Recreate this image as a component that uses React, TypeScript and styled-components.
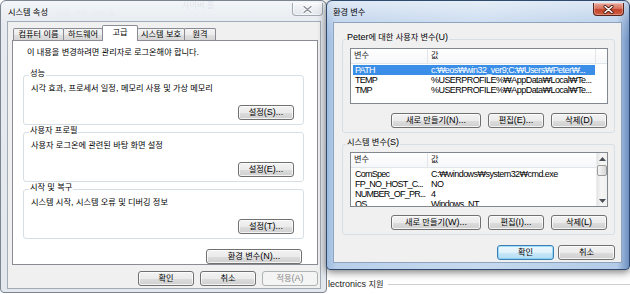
import React from "react";
import styled, { createGlobalStyle, css } from "styled-components";

const FONT = `"Liberation Sans", "Noto Sans CJK KR", sans-serif`;

const GlobalStyle = createGlobalStyle`
  * { box-sizing: border-box; }
  html, body { margin: 0; padding: 0; background: #ffffff; }
  body { overflow: hidden; }
`;

const HANGUL_RUN =
  /([\u1100-\u11ff\u3130-\u318f\uac00-\ud7a3]+(?: +[\u1100-\u11ff\u3130-\u318f\uac00-\ud7a3]+)*)/;

const Hangul = styled.span`
  font-size: 8.2px;
`;

const Tx: React.FC<{ children: string }> = ({ children }) => {
  const parts = children.split(HANGUL_RUN);
  return (
    <>
      {parts.map((p, i) =>
        i % 2 === 1 ? <Hangul key={i}>{p}</Hangul> : <React.Fragment key={i}>{p}</React.Fragment>
      )}
    </>
  );
};

const Desktop = styled.div`
  position: relative;
  width: 630px;
  height: 294px;
  overflow: hidden;
  background: #ffffff;
  font-family: ${FONT};
  font-size: 9px;
  line-height: 10px;
  color: #000;
`;

const BackdropText = styled.div<{ $x: number; $y: number; $c: string; $blur: number; $o: number }>`
  position: absolute;
  left: ${(p) => p.$x}px;
  top: ${(p) => p.$y}px;
  color: ${(p) => p.$c};
  filter: blur(${(p) => p.$blur}px);
  opacity: ${(p) => p.$o};
  font-size: 10px;
  line-height: 10px;
  white-space: nowrap;
`;

const FooterLegend = styled.div`
  position: absolute;
  left: 328px;
  top: 279px;
  width: 302px;
  display: flex;
  align-items: center;
  gap: 4px;
  color: #222;
  white-space: nowrap;
  &::after {
    content: "";
    flex: 1;
    height: 1px;
    background: #cfcfcf;
  }
`;

const WindowFrame = styled.div<{ $active?: boolean }>`
  position: absolute;
  top: 0;
  display: flex;
  flex-direction: column;
  border-radius: 6px 6px 4px 4px;
  ${(p) =>
    p.$active
      ? css`
          border: 1px solid #2f4a6e;
          background: linear-gradient(
              180deg,
              rgba(255, 255, 255, 0.55) 0px,
              rgba(255, 255, 255, 0.15) 22px,
              rgba(255, 255, 255, 0) 40px
            ),
            linear-gradient(90deg, #9dbbe0 0%, #b9cfea 3%, #c6d9ee 50%, #b3cbe8 96%, #6d8fc0 100%);
          box-shadow: 0 2px 8px rgba(0, 0, 0, 0.55);
        `
      : css`
          border: 1px solid #7b848f;
          background: linear-gradient(
            180deg,
            rgba(240, 243, 246, 0.8) 0px,
            rgba(228, 233, 239, 0.92) 24px,
            #e3e8ee 100%
          );
        `}
`;

const LeftWindow = styled(WindowFrame)`
  left: 0;
  width: 327px;
  height: 293px;
  padding: 0 5px 3px 6px;
`;

const RightWindow = styled(WindowFrame)`
  left: 326px;
  width: 304px;
  height: 270px;
  padding: 0 7px 6px 6px;
`;

const TitleBar = styled.div<{ $h: number }>`
  height: ${(p) => p.$h}px;
  display: flex;
  align-items: flex-start;
  flex-shrink: 0;
`;

const TitleText = styled.div<{ $ml: number }>`
  margin: 6px 0 0 ${(p) => p.$ml}px;
  white-space: nowrap;
  color: #000;
`;

const CloseButton = styled.div<{ $active?: boolean }>`
  margin: 2px -2px 0 auto;
  width: 31px;
  height: 13px;
  border-radius: 0 0 4px 4px;
  display: flex;
  align-items: center;
  justify-content: center;
  ${(p) =>
    p.$active
      ? css`
          border: 1px solid #5a241a;
          border-top: none;
          background: linear-gradient(180deg, #e9a99b 0%, #d8735f 45%, #c4452b 55%, #cf5e42 100%);
          box-shadow: inset 0 0 0 1px rgba(255, 255, 255, 0.3);
        `
      : css`
          border: 1px solid #a1a9b3;
          border-top: none;
          background: linear-gradient(180deg, #f6f8fa, #e2e7ed);
          box-shadow: inset 0 0 0 1px rgba(255, 255, 255, 0.6);
        `}
`;

const Client = styled.div<{ $edge: string }>`
  flex: 1;
  min-height: 0;
  display: flex;
  flex-direction: column;
  background: #f0f0f0;
  border: 1px solid ${(p) => p.$edge};
`;

const RightClient = styled(Client)`
  padding: 9px 6px 0 8px;
`;

const TabStrip = styled.div`
  position: relative;
  z-index: 1;
  display: flex;
  align-items: flex-end;
  height: 15px;
  margin-top: 3px;
  padding-left: 5px;
`;

const Tab = styled.div<{ $w: number; $active?: boolean }>`
  width: ${(p) => p.$w}px;
  height: 12px;
  margin-left: -1px;
  border: 1px solid #898c95;
  border-bottom: none;
  border-radius: 2px 2px 0 0;
  background: linear-gradient(180deg, #f4f4f4 0%, #ececec 50%, #e0e0e0 51%, #d6d6d6 100%);
  display: flex;
  align-items: center;
  justify-content: center;
  white-space: nowrap;
  &:first-child {
    margin-left: 0;
  }
  ${(p) =>
    p.$active &&
    css`
      height: 16px;
      margin-bottom: -1px;
      background: #ffffff;
      padding-bottom: 2px;
    `}
`;

const TabPanel = styled.div`
  margin-left: 4px;
  width: 306px;
  height: 225px;
  flex-shrink: 0;
  background: #ffffff;
  border: 1px solid #898c95;
  padding: 6px 13px 0 10px;
  display: flex;
  flex-direction: column;
`;

const Notice = styled.div`
  margin: 0 0 10px 4px;
  white-space: nowrap;
`;

const Group = styled.fieldset<{ $pl: number; $pr: number; $mt?: number }>`
  margin: ${(p) => p.$mt ?? 0}px 0 0;
  min-width: 0;
  border: 1px solid #d5dfe5;
  border-radius: 3px;
  padding: 0 ${(p) => p.$pr}px 4px ${(p) => p.$pl}px;
`;

const GroupLegend = styled.legend<{ $ml: number }>`
  padding: 0 1px 4px;
  margin-left: ${(p) => p.$ml}px;
  line-height: 10px;
  white-space: nowrap;
`;

const GroupText = styled.div`
  line-height: 10px;
  white-space: nowrap;
`;

const ButtonRow = styled.div<{ $mt: number; $gap: number; $pr?: number }>`
  display: flex;
  justify-content: flex-end;
  gap: ${(p) => p.$gap}px;
  margin-top: ${(p) => p.$mt}px;
  padding-right: ${(p) => p.$pr ?? 0}px;
  flex-shrink: 0;
`;

const Button = styled.button<{ $w: number; $default?: boolean }>`
  appearance: none;
  width: ${(p) => p.$w}px;
  height: 15px;
  margin: 0;
  padding: 0;
  font-family: inherit;
  font-size: 9px;
  line-height: 13px;
  color: #000;
  white-space: nowrap;
  border: 1px solid #707070;
  border-radius: 3px;
  background: linear-gradient(180deg, #f2f2f2 0%, #ebebeb 50%, #dddddd 51%, #cfcfcf 100%);
  box-shadow: inset 0 0 0 1px rgba(255, 255, 255, 0.75);
  ${(p) =>
    p.$default &&
    css`
      border-color: #3c7fb1;
      background: linear-gradient(180deg, #eef8fd 0%, #dff1fb 50%, #c9e8f8 51%, #b4dcf3 100%);
      box-shadow: inset 0 0 0 1px rgba(96, 200, 248, 0.55);
    `}
  &:disabled {
    color: #8a8a8a;
    border-color: #adb2b5;
    background: #f4f4f4;
    box-shadow: none;
  }
`;

const ListView = styled.div<{ $h: number; $mt: number }>`
  height: ${(p) => p.$h}px;
  margin-top: ${(p) => p.$mt}px;
  border: 1px solid #828790;
  background: #ffffff;
  display: flex;
  overflow: hidden;
  flex-shrink: 0;
`;

const ListBody = styled.div`
  flex: 1;
  min-width: 0;
  display: flex;
  flex-direction: column;
  overflow: hidden;
`;

const ListHeader = styled.div`
  display: flex;
  height: 15px;
  flex-shrink: 0;
  border-bottom: 1px solid #e2e5ea;
  background: linear-gradient(180deg, #ffffff, #f6f7f9);
`;

const HeaderCell = styled.div<{ $w?: number; $last?: boolean }>`
  ${(p) => (p.$w ? `width: ${p.$w}px; flex-shrink: 0;` : "flex: 1;")}
  border-right: ${(p) => (p.$last ? "none" : "1px solid #e3e5e9")};
  padding-left: 3px;
  display: flex;
  align-items: center;
  color: #1a1a1a;
  white-space: nowrap;
`;

const Rows = styled.div`
  padding-top: 1px;
`;

const Row = styled.div<{ $sel?: boolean }>`
  display: flex;
  height: 10px;
  width: 242px;
  margin-left: 2px;
  line-height: 10px;
  white-space: nowrap;
  ${(p) =>
    p.$sel &&
    css`
      background: #3a8ee8;
      color: #ffffff;
    `}
`;

const NameCell = styled.div`
  width: 74px;
  flex-shrink: 0;
  padding-left: 2px;
  overflow: hidden;
  letter-spacing: -0.75px;
`;

const ValueCell = styled.div`
  flex: 1;
  min-width: 0;
  padding-left: 4px;
  overflow: hidden;
  letter-spacing: -0.55px;
`;

const ScrollBar = styled.div`
  width: 11px;
  flex-shrink: 0;
  display: flex;
  flex-direction: column;
  background: linear-gradient(90deg, #e4e4e4, #f6f6f6 40%, #f0f0f0);
  border-left: 1px solid #ececec;
`;

const ScrollArrow = styled.div`
  height: 11px;
  flex-shrink: 0;
  display: flex;
  align-items: center;
  justify-content: center;
`;

const ScrollThumb = styled.div`
  height: 11px;
  margin: 1px 0 0 0;
  border: 1px solid #9b9b9b;
  border-radius: 2px;
  background: linear-gradient(90deg, #f6f6f6, #e6e6e6 50%, #d6d6d6);
`;

const ScrollTrack = styled.div`
  flex: 1;
`;

const CloseGlyph: React.FC<{ active?: boolean }> = ({ active }) => (
  <svg width="11" height="9" viewBox="0 0 11 9">
    {active ? (
      <>
        <path d="M2 1.5 L9 7.5 M9 1.5 L2 7.5" stroke="#4a1a10" strokeWidth="3.2" strokeLinecap="round" />
        <path d="M2 1.5 L9 7.5 M9 1.5 L2 7.5" stroke="#ffffff" strokeWidth="1.6" strokeLinecap="round" />
      </>
    ) : (
      <>
        <path d="M2 1.5 L9 7.5 M9 1.5 L2 7.5" stroke="#ffffff" strokeWidth="3" strokeLinecap="round" />
        <path d="M2 1.5 L9 7.5 M9 1.5 L2 7.5" stroke="#8b9098" strokeWidth="1.4" strokeLinecap="round" />
      </>
    )}
  </svg>
);

const Arrow: React.FC<{ up?: boolean }> = ({ up }) => (
  <svg width="7" height="4" viewBox="0 0 7 4">
    <path d={up ? "M0 4 L3.5 0 L7 4 Z" : "M0 0 L3.5 4 L7 0 Z"} fill="#4a4f57" />
  </svg>
);

type Var = { name: string; value: string; sel?: boolean };

const userVars: Var[] = [
  { name: "PATH", value: "c:₩eos₩win32_ver9;C:₩Users₩Peter₩...", sel: true },
  { name: "TEMP", value: "%USERPROFILE%₩AppData₩Local₩Te..." },
  { name: "TMP", value: "%USERPROFILE%₩AppData₩Local₩Te..." },
];

const sysVars: Var[] = [
  { name: "ComSpec", value: "C:₩windows₩system32₩cmd.exe" },
  { name: "FP_NO_HOST_C...", value: "NO" },
  { name: "NUMBER_OF_PR...", value: "4" },
  { name: "OS", value: "Windows_NT" },
];

const VarList: React.FC<{ vars: Var[]; h: number; mt: number; scroll?: boolean }> = ({
  vars,
  h,
  mt,
  scroll,
}) => (
  <ListView $h={h} $mt={mt}>
    <ListBody>
      <ListHeader>
        <HeaderCell $w={77}>
          <Tx>변수</Tx>
        </HeaderCell>
        <HeaderCell $w={168} $last={scroll}>
          <Tx>값</Tx>
        </HeaderCell>
        {!scroll && <HeaderCell $last />}
      </ListHeader>
      <Rows>
        {vars.map((v) => (
          <Row key={v.name} $sel={v.sel}>
            <NameCell>{v.name}</NameCell>
            <ValueCell>{v.value}</ValueCell>
          </Row>
        ))}
      </Rows>
    </ListBody>
    {scroll && (
      <ScrollBar>
        <ScrollArrow>
          <Arrow up />
        </ScrollArrow>
        <ScrollThumb />
        <ScrollTrack />
        <ScrollArrow>
          <Arrow />
        </ScrollArrow>
      </ScrollBar>
    )}
  </ListView>
);

const SettingGroup: React.FC<{ title: string; text: string; button: string }> = ({
  title,
  text,
  button,
}) => (
  <Group $pl={7} $pr={9}>
    <GroupLegend $ml={-2}>
      <Tx>{title}</Tx>
    </GroupLegend>
    <GroupText>
      <Tx>{text}</Tx>
    </GroupText>
    <ButtonRow $mt={11} $gap={0}>
      <Button $w={56}>
        <Tx>{button}</Tx>
      </Button>
    </ButtonRow>
  </Group>
);

export default function App() {
  return (
    <Desktop>
      <GlobalStyle />
      <BackdropText $x={182} $y={0} $c="#2a3f7a" $blur={0.6} $o={0.5}>
        <Tx>사이버 홈</Tx>
      </BackdropText>
      <BackdropText $x={56} $y={9} $c="#7fa0d8" $blur={1} $o={0.4}>
        <Tx>다운 기본 정보 등</Tx>
      </BackdropText>
      <FooterLegend>
        <span>
          <Tx>lectronics 지원</Tx>
        </span>
      </FooterLegend>

      <LeftWindow>
        <TitleBar $h={20}>
          <TitleText $ml={1}>
            <Tx>시스템 속성</Tx>
          </TitleText>
          <CloseButton>
            <CloseGlyph />
          </CloseButton>
        </TitleBar>
        <Client $edge="#a3acb6">
          <TabStrip>
            <Tab $w={51}>
              <Tx>컴퓨터 이름</Tx>
            </Tab>
            <Tab $w={40}>
              <Tx>하드웨어</Tx>
            </Tab>
            <Tab $w={36} $active>
              <Tx>고급</Tx>
            </Tab>
            <Tab $w={48}>
              <Tx>시스템 보호</Tx>
            </Tab>
            <Tab $w={32}>
              <Tx>원격</Tx>
            </Tab>
          </TabStrip>
          <TabPanel>
            <Notice>
              <Tx>이 내용을 변경하려면 관리자로 로그온해야 합니다.</Tx>
            </Notice>
            <SettingGroup
              title="성능"
              text="시각 효과, 프로세서 일정, 메모리 사용 및 가상 메모리"
              button="설정(S)..."
            />
            <SettingGroup
              title="사용자 프로필"
              text="사용자 로그온에 관련된 바탕 화면 설정"
              button="설정(E)..."
            />
            <SettingGroup
              title="시작 및 복구"
              text="시스템 시작, 시스템 오류 및 디버깅 정보"
              button="설정(T)..."
            />
            <ButtonRow $mt={10} $gap={0} $pr={2}>
              <Button $w={96}>
                <Tx>환경 변수(N)...</Tx>
              </Button>
            </ButtonRow>
          </TabPanel>
          <ButtonRow $mt={6} $gap={6} $pr={2}>
            <Button $w={56}>
              <Tx>확인</Tx>
            </Button>
            <Button $w={56}>
              <Tx>취소</Tx>
            </Button>
            <Button $w={56} disabled>
              <Tx>적용(A)</Tx>
            </Button>
          </ButtonRow>
        </Client>
      </LeftWindow>

      <RightWindow $active>
        <TitleBar $h={21}>
          <TitleText $ml={0}>
            <Tx>환경 변수</Tx>
          </TitleText>
          <CloseButton $active>
            <CloseGlyph active />
          </CloseButton>
        </TitleBar>
        <RightClient $edge="#8ea3bd">
          <Group $pl={7} $pr={6}>
            <GroupLegend $ml={-4}>
              <Tx>Peter에 대한 사용자 변수(U)</Tx>
            </GroupLegend>
            <VarList vars={userVars} h={56} mt={1} />
            <ButtonRow $mt={9} $gap={7} $pr={1}>
              <Button $w={90}>
                <Tx>새로 만들기(N)...</Tx>
              </Button>
              <Button $w={56}>
                <Tx>편집(E)...</Tx>
              </Button>
              <Button $w={56}>
                <Tx>삭제(D)</Tx>
              </Button>
            </ButtonRow>
          </Group>
          <Group $pl={7} $pr={6} $mt={4}>
            <GroupLegend $ml={-4}>
              <Tx>시스템 변수(S)</Tx>
            </GroupLegend>
            <VarList vars={sysVars} h={55} mt={0} scroll />
            <ButtonRow $mt={8} $gap={7} $pr={1}>
              <Button $w={90}>
                <Tx>새로 만들기(W)...</Tx>
              </Button>
              <Button $w={56}>
                <Tx>편집(I)...</Tx>
              </Button>
              <Button $w={56}>
                <Tx>삭제(L)</Tx>
              </Button>
            </ButtonRow>
          </Group>
          <ButtonRow $mt={10} $gap={4} $pr={0}>
            <Button $w={57} $default>
              <Tx>확인</Tx>
            </Button>
            <Button $w={57}>
              <Tx>취소</Tx>
            </Button>
          </ButtonRow>
        </RightClient>
      </RightWindow>
    </Desktop>
  );
}
